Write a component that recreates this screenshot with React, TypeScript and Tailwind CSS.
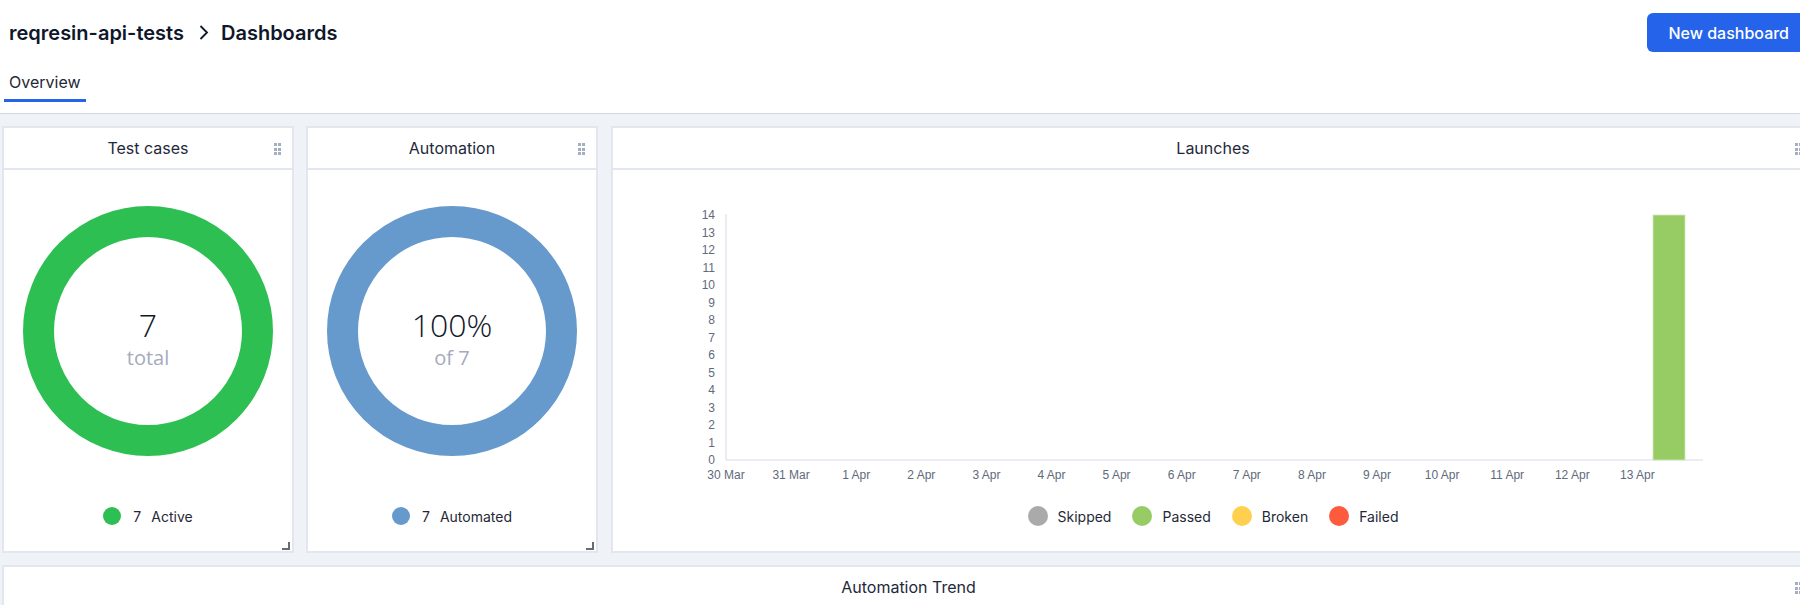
import React from "react";

const FONT = { fontFamily: "Inter, 'Noto Sans', sans-serif" };

function Handle() {
  return (
    <div className="absolute right-[11px] top-[15px] grid grid-cols-2 gap-[1.5px]">
      {[0, 1, 2, 3, 4, 5].map((i) => (
        <div key={i} className="w-[3px] h-[3px] bg-[#a6afc1]" />
      ))}
    </div>
  );
}

function Resize() {
  return <div className="absolute right-[2px] bottom-[1px] w-[8px] h-[8px] border-r-2 border-b-2 border-[#6b6b6b]" />;
}

function CardHeader({ title }: { title: string }) {
  return (
    <div className="relative h-[42px] border-b-2 border-[#e2e7ef] flex items-center justify-center">
      <span className="text-[16px] text-[#1e293b]">{title}</span>
      <Handle />
    </div>
  );
}

function Donut({ color, big, small }: { color: string; big: string; small: string }) {
  return (
    <div className="relative w-[250px] h-[250px]">
      <svg width="250" height="250" viewBox="0 0 250 250">
        <circle cx="125" cy="125" r="109.5" fill="none" stroke={color} strokeWidth="31" />
      </svg>
      <div
        className="absolute inset-0 flex flex-col items-center justify-center pt-[16px]"
        style={{ fontFamily: "'Open Sans', 'Noto Sans', sans-serif" }}
      >
        <span className="text-[32px] leading-[34px] font-light text-[#111827]">{big}</span>
        <span className="mt-[4px] text-[20px] leading-[24px] text-[#a5aabd]">{small}</span>
      </div>
    </div>
  );
}

function DonutCard({
  title,
  color,
  big,
  small,
  count,
  label,
}: {
  title: string;
  color: string;
  big: string;
  small: string;
  count: string;
  label: string;
}) {
  return (
    <div className="relative w-[292px] h-[427px] shrink-0 bg-white border-2 border-[#e2e7ef] flex flex-col">
      <CardHeader title={title} />
      <div className="relative flex-1 flex flex-col items-center pt-[36px]">
        <Donut color={color} big={big} small={small} />
        <div className="mt-[51px] h-[18px] flex items-center text-[14px] text-[#1f2937]">
          <span className="w-[18px] h-[18px] rounded-full" style={{ background: color }} />
          <span className="ml-3">{count}</span>
          <span className="ml-[10px]">{label}</span>
        </div>
        <Resize />
      </div>
    </div>
  );
}

const dates = [
  "30 Mar",
  "31 Mar",
  "1 Apr",
  "2 Apr",
  "3 Apr",
  "4 Apr",
  "5 Apr",
  "6 Apr",
  "7 Apr",
  "8 Apr",
  "9 Apr",
  "10 Apr",
  "11 Apr",
  "12 Apr",
  "13 Apr",
];

function Chart() {
  const x0 = 113;
  const yBottom = 290;
  const step = 17.5;
  return (
    <svg width="1100" height="320" viewBox="0 0 1100 320" className="block">
      <g style={{ fontFamily: "'Liberation Sans', Arial, sans-serif" }} fontSize="12" fill="#5f6a7b">
        {Array.from({ length: 15 }).map((_, i) => (
          <text key={i} x={102} y={yBottom - i * step + 4} textAnchor="end">
            {i}
          </text>
        ))}
        {dates.map((d, i) => (
          <text key={d} x={x0 + i * 65.1} y={309} textAnchor="middle">
            {d}
          </text>
        ))}
      </g>
      <line x1={x0} y1={44} x2={x0} y2={yBottom} stroke="#e3e7ee" strokeWidth="1.5" />
      <line x1={x0} y1={yBottom} x2={1090} y2={yBottom} stroke="#e3e7ee" strokeWidth="1.5" />
      <rect x={1040} y={45} width={32} height={245} fill="#97cc64" stroke="#d2e9bd" strokeWidth="0.8" />
    </svg>
  );
}

function LaunchesCard() {
  const items = [
    { c: "#aaaaaa", t: "Skipped" },
    { c: "#97cc64", t: "Passed" },
    { c: "#ffd050", t: "Broken" },
    { c: "#fd5a3e", t: "Failed" },
  ];
  return (
    <div className="relative flex-1 h-[427px] ml-px bg-white border-2 border-[#e2e7ef] flex flex-col">
      <CardHeader title="Launches" />
      <div className="flex-1 flex flex-col">
        <Chart />
        <div className="mt-[16px] h-[20px] flex items-center justify-center gap-[21px] text-[14px] text-[#1f2937]">
          {items.map((it) => (
            <div key={it.t} className="flex items-center gap-[10px]">
              <span className="w-[20px] h-[20px] rounded-full" style={{ background: it.c }} />
              <span>{it.t}</span>
            </div>
          ))}
        </div>
      </div>
    </div>
  );
}

export default function App() {
  return (
    <div className="w-[1800px] h-[605px] overflow-hidden bg-[#eff2f7]" style={FONT}>
      <div className="w-[1817px]">
        <header className="h-[114px] bg-white border-b border-[#d0d7e2] flex flex-col">
          <div className="pt-[13px] pl-[9px] pr-[7px] flex items-center justify-between">
            <div className="flex items-center text-[20px] font-semibold text-[#0f172a]">
              <span>reqresin-api-tests</span>
              <svg width="10" height="15" viewBox="0 0 10 15" className="ml-[15px] mr-[12px]">
                <polyline points="1.5,1 8,7.5 1.5,14" fill="none" stroke="#0f172a" strokeWidth="1.8" />
              </svg>
              <span>Dashboards</span>
            </div>
            <button className="h-[39px] px-[21px] rounded-md bg-[#2563eb] text-white text-[16px] font-medium">
              New dashboard
            </button>
          </div>
          <div className="mt-[18px] pl-[4px] flex">
            <div className="px-[5px] pb-[5px] border-b-[3px] border-[#2563eb] text-[16px] leading-[24px] text-[#1f2937]">
              Overview
            </div>
          </div>
        </header>
        <div className="px-[2px] pt-3">
          <div className="flex gap-3">
            <DonutCard title="Test cases" color="#2ebf52" big="7" small="total" count="7" label="Active" />
            <DonutCard title="Automation" color="#6699cc" big="100%" small="of 7" count="7" label="Automated" />
            <LaunchesCard />
          </div>
          <div className="mt-[12px] bg-white border-2 border-[#e2e7ef] h-[200px]">
            <CardHeader title="Automation Trend" />
          </div>
        </div>
      </div>
    </div>
  );
}
